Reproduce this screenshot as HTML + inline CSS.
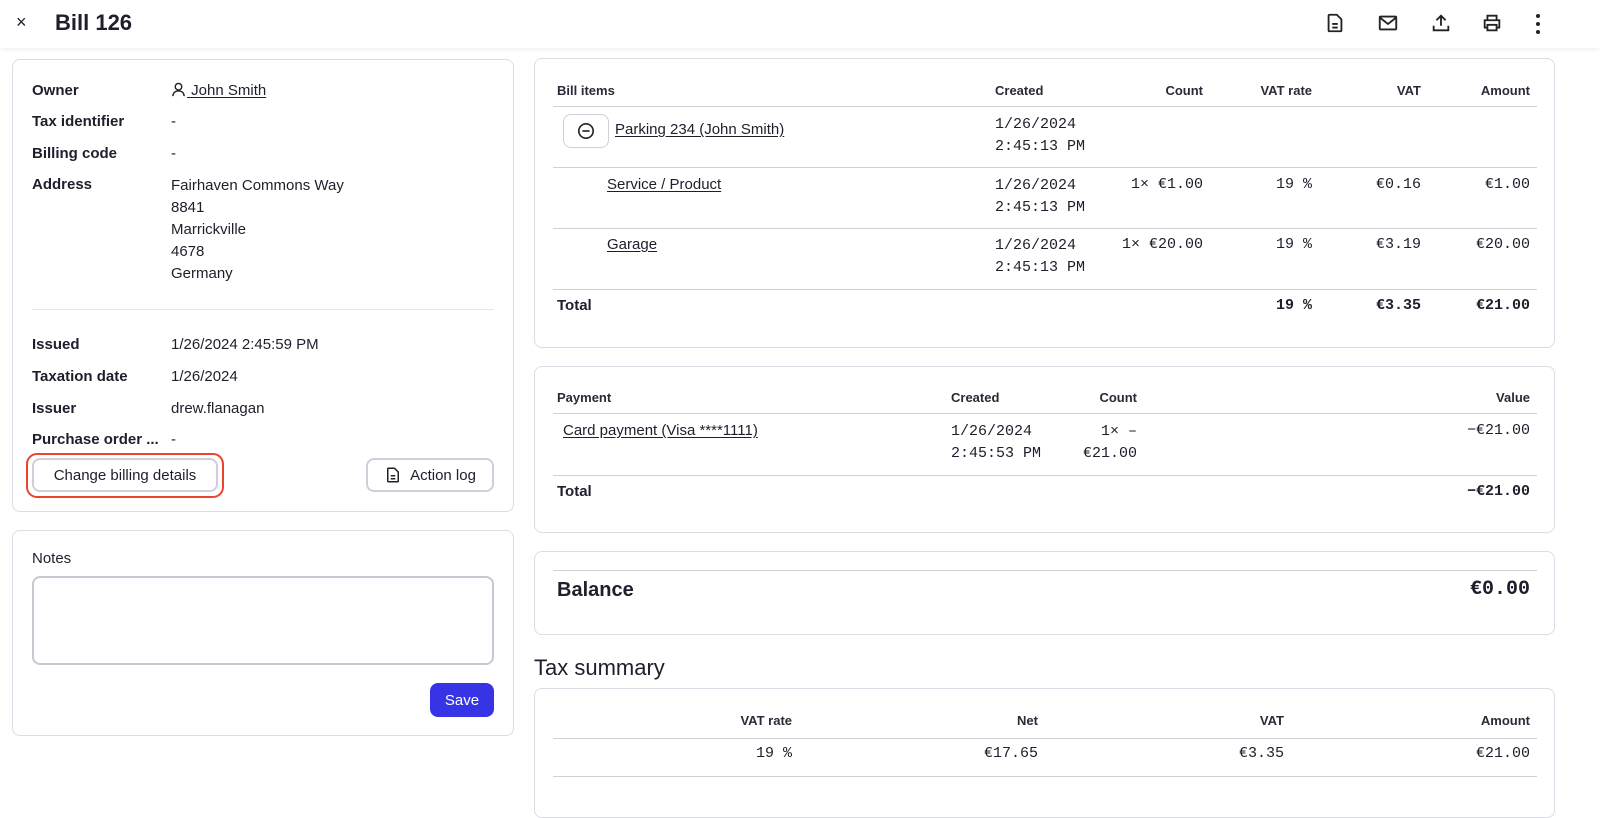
<!DOCTYPE html>
<html><head><meta charset="utf-8">
<style>
*{box-sizing:border-box;margin:0;padding:0}
body{width:1600px;height:799px;overflow:hidden;background:#fff;font-family:"Liberation Sans",sans-serif;color:#1e1e2c;position:relative;font-size:15px}
.t{position:absolute;white-space:nowrap;line-height:20px}
.r{text-align:right}
.b{font-weight:bold}
.h{font-size:13px;font-weight:bold;color:#2a2a38}
.m{font-family:"Liberation Mono",monospace;font-size:15px}
.u{text-decoration:underline;text-underline-offset:2px}
.card{position:absolute;border:1px solid #dcdce6;border-radius:8px;background:#fff}
.ln{position:absolute;height:1px;background:#cfcfd6}
.btn{position:absolute;border:2px solid #cfcfdc;border-radius:8px;background:#fff;font-size:15px;display:flex;align-items:center;justify-content:center}
</style></head><body>
<div style="position:absolute;left:0;top:0;width:1600px;height:48px;background:#fff;box-shadow:0 2px 4px rgba(0,0,0,0.06)"></div>
<div class="t" style="left:16px;top:12px;font-size:18px">×</div>
<div class="t b" style="left:55px;top:10px;font-size:22px;line-height:26px">Bill 126</div>
<svg style="position:absolute;left:1324px;top:12px" width="22" height="22" viewBox="0 0 24 24" fill="none" stroke="#222" stroke-width="2"><path d="M6 3h8l5 5v12a1 1 0 0 1-1 1H6a1 1 0 0 1-1-1V4a1 1 0 0 1 1-1z"/><path d="M9 13h6M9 17h6"/></svg>
<svg style="position:absolute;left:1377px;top:12px" width="22" height="22" viewBox="0 0 24 24" fill="none" stroke="#222" stroke-width="2"><rect x="3" y="5" width="18" height="14" rx="1"/><path d="M3 6l9 7 9-7"/></svg>
<svg style="position:absolute;left:1430px;top:12px" width="22" height="22" viewBox="0 0 24 24" fill="none" stroke="#222" stroke-width="2"><path d="M4 15v5h16v-5M12 15V4M7 9l5-5 5 5"/></svg>
<svg style="position:absolute;left:1481px;top:12px" width="22" height="22" viewBox="0 0 24 24" fill="none" stroke="#222" stroke-width="2"><path d="M7 8V4h10v4M7 17H4v-8h16v8h-3"/><rect x="7" y="14" width="10" height="6"/></svg>
<svg style="position:absolute;left:1535px;top:12px" width="6" height="24" viewBox="0 0 6 24" fill="#222"><circle cx="3" cy="4" r="2"/><circle cx="3" cy="12" r="2"/><circle cx="3" cy="20" r="2"/></svg>

<!-- left card -->
<div class="card" style="left:12px;top:59px;width:502px;height:453px"></div>
<div class="t b" style="left:32px;top:81px">Owner</div>
<svg style="position:absolute;left:171px;top:82px" width="15" height="15" viewBox="0 0 16 16" fill="none" stroke="#222" stroke-width="1.5"><circle cx="8" cy="5" r="3.5"/><path d="M2 15c0-3.5 2.7-5.5 6-5.5s6 2 6 5.5"/></svg>
<div class="t u" style="left:187px;top:81px">&nbsp;John Smith</div>
<div class="t b" style="left:32px;top:112px">Tax identifier</div><div class="t" style="left:171px;top:112px">-</div>
<div class="t b" style="left:32px;top:144px">Billing code</div><div class="t" style="left:171px;top:144px">-</div>
<div class="t b" style="left:32px;top:175px">Address</div>
<div class="t" style="left:171px;top:175px;line-height:22px">Fairhaven Commons Way<br>8841<br>Marrickville<br>4678<br>Germany</div>
<div class="ln" style="left:32px;top:309px;width:462px;background:#e6e6ec"></div>
<div class="t b" style="left:32px;top:335px">Issued</div><div class="t" style="left:171px;top:335px">1/26/2024 2:45:59 PM</div>
<div class="t b" style="left:32px;top:367px">Taxation date</div><div class="t" style="left:171px;top:367px">1/26/2024</div>
<div class="t b" style="left:32px;top:399px">Issuer</div><div class="t" style="left:171px;top:399px">drew.flanagan</div>
<div class="t b" style="left:32px;top:430px">Purchase order ...</div><div class="t" style="left:171px;top:430px">-</div>
<div style="position:absolute;left:26px;top:453px;width:198px;height:45px;border:2px solid #e8452c;border-radius:11px"></div>
<div class="btn" style="left:32px;top:458px;width:186px;height:34px">Change billing details</div>
<div class="btn" style="left:366px;top:458px;width:128px;height:34px"><svg width="18" height="18" viewBox="0 0 24 24" fill="none" stroke="#222" stroke-width="2" style="margin-right:8px"><path d="M6 3h8l5 5v12a1 1 0 0 1-1 1H6a1 1 0 0 1-1-1V4a1 1 0 0 1 1-1z"/><path d="M9 13h6M9 17h6"/></svg>Action log</div>

<div class="card" style="left:12px;top:530px;width:502px;height:206px"></div>
<div class="t" style="left:32px;top:549px">Notes</div>
<div style="position:absolute;left:32px;top:576px;width:462px;height:89px;border:2px solid #c8c8d4;border-radius:8px"></div>
<div style="position:absolute;left:430px;top:683px;width:64px;height:34px;background:#3734e6;border-radius:8px;color:#fff;display:flex;align-items:center;justify-content:center">Save</div>

<!-- bill items -->
<div class="card" style="left:534px;top:58px;width:1021px;height:290px"></div>
<div class="t h" style="left:557px;top:81px">Bill items</div>
<div class="t h" style="left:995px;top:81px">Created</div>
<div class="t h r" style="left:1103px;width:100px;top:81px">Count</div>
<div class="t h r" style="left:1212px;width:100px;top:81px">VAT rate</div>
<div class="t h r" style="left:1321px;width:100px;top:81px">VAT</div>
<div class="t h r" style="left:1430px;width:100px;top:81px">Amount</div>
<div class="ln" style="left:553px;top:106px;width:984px"></div>
<div class="btn" style="left:563px;top:114px;width:46px;height:34px;border-width:1.5px"><svg width="18" height="18" viewBox="0 0 20 20" fill="none" stroke="#222" stroke-width="1.8"><circle cx="10" cy="10" r="8"/><path d="M6 10h8"/></svg></div>
<div class="t u" style="left:615px;top:120px">Parking 234 (John Smith)</div>
<div class="t m" style="left:995px;top:114px;line-height:22px">1/26/2024<br>2:45:13 PM</div>
<div class="ln" style="left:553px;top:167px;width:984px"></div>
<div class="t u" style="left:607px;top:175px">Service / Product</div>
<div class="t m" style="left:995px;top:175px;line-height:22px">1/26/2024<br>2:45:13 PM</div>
<div class="t m r" style="left:1083px;width:120px;top:175px">1× €1.00</div>
<div class="t m r" style="left:1212px;width:100px;top:175px">19 %</div>
<div class="t m r" style="left:1321px;width:100px;top:175px">€0.16</div>
<div class="t m r" style="left:1430px;width:100px;top:175px">€1.00</div>
<div class="ln" style="left:553px;top:228px;width:984px"></div>
<div class="t u" style="left:607px;top:235px">Garage</div>
<div class="t m" style="left:995px;top:235px;line-height:22px">1/26/2024<br>2:45:13 PM</div>
<div class="t m r" style="left:1083px;width:120px;top:235px">1× €20.00</div>
<div class="t m r" style="left:1212px;width:100px;top:235px">19 %</div>
<div class="t m r" style="left:1321px;width:100px;top:235px">€3.19</div>
<div class="t m r" style="left:1430px;width:100px;top:235px">€20.00</div>
<div class="ln" style="left:553px;top:289px;width:984px"></div>
<div class="t b" style="left:557px;top:296px">Total</div>
<div class="t m b r" style="left:1212px;width:100px;top:296px">19 %</div>
<div class="t m b r" style="left:1321px;width:100px;top:296px">€3.35</div>
<div class="t m b r" style="left:1430px;width:100px;top:296px">€21.00</div>

<!-- payment -->
<div class="card" style="left:534px;top:366px;width:1021px;height:167px"></div>
<div class="t h" style="left:557px;top:388px">Payment</div>
<div class="t h" style="left:951px;top:388px">Created</div>
<div class="t h r" style="left:1037px;width:100px;top:388px">Count</div>
<div class="t h r" style="left:1430px;width:100px;top:388px">Value</div>
<div class="ln" style="left:553px;top:413px;width:984px"></div>
<div class="t u" style="left:563px;top:421px">Card payment (Visa ****1111)</div>
<div class="t m" style="left:951px;top:421px;line-height:22px">1/26/2024<br>2:45:53 PM</div>
<div class="t m r" style="left:1037px;width:100px;top:421px;line-height:22px">1× –<br>€21.00</div>
<div class="t m r" style="left:1400px;width:130px;top:421px">−€21.00</div>
<div class="ln" style="left:553px;top:475px;width:984px"></div>
<div class="t b" style="left:557px;top:482px">Total</div>
<div class="t m b r" style="left:1400px;width:130px;top:482px">−€21.00</div>

<!-- balance -->
<div class="card" style="left:534px;top:551px;width:1021px;height:84px"></div>
<div class="ln" style="left:553px;top:570px;width:984px"></div>
<div class="t" style="left:557px;top:578px;font-size:20px;line-height:24px;font-weight:600">Balance</div>
<div class="t m b r" style="left:1380px;width:150px;top:578px;font-size:20px;line-height:24px">€0.00</div>

<div class="t" style="left:534px;top:655px;font-size:22px;line-height:26px">Tax summary</div>
<div class="card" style="left:534px;top:688px;width:1021px;height:130px"></div>
<div class="t h r" style="left:692px;width:100px;top:711px">VAT rate</div>
<div class="t h r" style="left:938px;width:100px;top:711px">Net</div>
<div class="t h r" style="left:1184px;width:100px;top:711px">VAT</div>
<div class="t h r" style="left:1430px;width:100px;top:711px">Amount</div>
<div class="ln" style="left:553px;top:738px;width:984px"></div>
<div class="t m r" style="left:692px;width:100px;top:744px">19 %</div>
<div class="t m r" style="left:938px;width:100px;top:744px">€17.65</div>
<div class="t m r" style="left:1184px;width:100px;top:744px">€3.35</div>
<div class="t m r" style="left:1430px;width:100px;top:744px">€21.00</div>
<div class="ln" style="left:553px;top:776px;width:984px"></div>
</body></html>
